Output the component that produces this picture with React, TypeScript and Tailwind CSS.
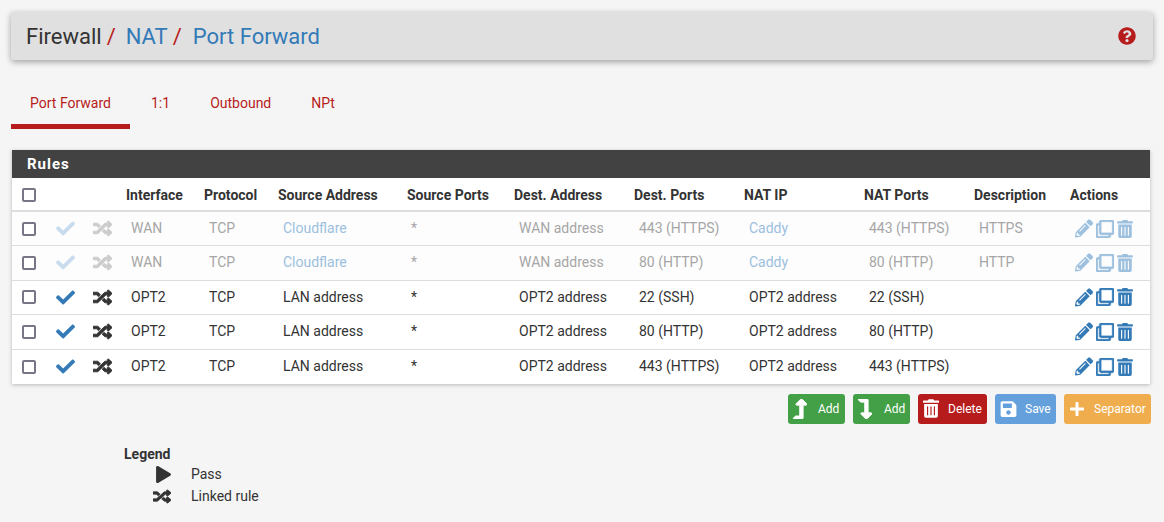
import React from "react";
import { FaCheck, FaRandom, FaPencilAlt, FaRegClone, FaTrashAlt, FaLevelUpAlt, FaLevelDownAlt, FaSave, FaPlus, FaPlay, FaQuestionCircle } from "react-icons/fa";

const rows = [
  { off: true, i: "WAN", p: "TCP", s: "Cloudflare", link: true, sp: "*", d: "WAN address", dp: "443 (HTTPS)", n: "Caddy", nl: true, np: "443 (HTTPS)", de: "HTTPS" },
  { off: true, i: "WAN", p: "TCP", s: "Cloudflare", link: true, sp: "*", d: "WAN address", dp: "80 (HTTP)", n: "Caddy", nl: true, np: "80 (HTTP)", de: "HTTP" },
  { off: false, i: "OPT2", p: "TCP", s: "LAN address", link: false, sp: "*", d: "OPT2 address", dp: "22 (SSH)", n: "OPT2 address", nl: false, np: "22 (SSH)", de: "" },
  { off: false, i: "OPT2", p: "TCP", s: "LAN address", link: false, sp: "*", d: "OPT2 address", dp: "80 (HTTP)", n: "OPT2 address", nl: false, np: "80 (HTTP)", de: "" },
  { off: false, i: "OPT2", p: "TCP", s: "LAN address", link: false, sp: "*", d: "OPT2 address", dp: "443 (HTTPS)", n: "OPT2 address", nl: false, np: "443 (HTTPS)", de: "" },
];

const heads = ["Interface", "Protocol", "Source Address", "Source Ports", "Dest. Address", "Dest. Ports", "NAT IP", "NAT Ports", "Description", "Actions"];

const Box = () => <span className="block w-[14px] h-[14px] rounded-[2px] border-2 border-[#767687] bg-white" />;

function Btn({ bg, icon, label, w, gap }: { bg: string; icon: React.ReactNode; label: string; w: string; gap: string }) {
  return (
    <button className={`${bg} ${w} ${gap} h-[30px] rounded-[3px] flex items-center pl-[5px] text-white text-[12px]`}>
      {icon}
      <span>{label}</span>
    </button>
  );
}

export default function App() {
  return (
    <div className="min-h-[522px] bg-[#f5f5f5] text-[#333] text-[14px] font-['Roboto',sans-serif] pt-[12px] px-[11px] pb-[12px]">
      <div className="h-[48px] bg-[#e0e0e0] rounded-[3px] shadow-[0_2px_6px_rgba(0,0,0,0.35)] flex items-center justify-between pl-[15px] pr-[16px] text-[22px] leading-none">
        <div className="flex items-center pt-[1px]">
          <span className="text-[#333]">Firewall</span>
          <span className="text-[#b71c1c] ml-[5px] mr-[10px]">/</span>
          <span className="text-[#337ab7]">NAT</span>
          <span className="text-[#b71c1c] ml-[5px] mr-[11px]">/</span>
          <span className="text-[#337ab7]">Port Forward</span>
        </div>
        <FaQuestionCircle className="text-[#b71c1c] w-[18px] h-[18px] mr-[1px]" />
      </div>

      <div className="mt-[20px] flex h-[49px] text-[14px] text-[#b71c1c]">
        <div className="w-[119px] flex items-center justify-center border-b-[5px] border-[#b71c1c] pt-[3px]">Port Forward</div>
        <div className="pl-[21px] pr-[20px] flex items-center pb-[2px]">1:1</div>
        <div className="px-[20px] flex items-center pb-[2px]">Outbound</div>
        <div className="px-[20px] flex items-center pb-[2px]">NPt</div>
      </div>

      <div className="mt-[21px] ml-[1px] mr-[3px] bg-white shadow-[0_1px_4px_rgba(0,0,0,0.25)]">
        <div className="h-[28px] bg-[#424242] text-white font-bold text-[15px] tracking-[1px] flex items-center pl-[15px] pt-[1px]">Rules</div>
        <table className="w-full table-fixed border-collapse">
          <colgroup>
            <col className="w-[34px]" />
            <col className="w-[35px]" />
            <col className="w-[45px]" />
            <col className="w-[78px]" />
            <col className="w-[74px]" />
            <col className="w-[129px]" />
            <col className="w-[107px]" />
            <col className="w-[120px]" />
            <col className="w-[110px]" />
            <col className="w-[120px]" />
            <col className="w-[110px]" />
            <col className="w-[96px]" />
            <col />
          </colgroup>
          <thead>
            <tr className="h-[33px] border-b-2 border-[#ddd]">
              <th className="pl-[10px] font-bold text-left pt-[2px]"><Box /></th>
              <th />
              <th />
              {heads.map((h) => (
                <th key={h} className="text-left font-bold text-[14px] text-[#333] whitespace-nowrap pt-[2px]">{h}</th>
              ))}
            </tr>
          </thead>
          <tbody>
            {rows.map((r, k) => (
              <tr key={k} className={`h-[34.5px] text-[14px] ${k ? "border-t border-[#ddd]" : ""} ${r.off ? "bg-[#fdfdfd] text-[#a6a6a6]" : "text-[#333]"}`}>
                <td className="pl-[10px] "><Box /></td>
                <td className="pl-[10px]"><FaCheck className={`w-[19px] h-[19px] ${r.off ? "text-[#c9dced]" : "text-[#337ab7]"}`} /></td>
                <td className="pl-[12px]"><FaRandom preserveAspectRatio="none" stroke="currentColor" strokeWidth="24" className={`w-[19px] h-[17px] ${r.off ? "text-[#cccccc]" : "text-[#333]"}`} /></td>
                <td className="pl-[5px]">{r.i}</td>
                <td className="pl-[5px]">{r.p}</td>
                <td className={`pl-[5px] ${r.link ? "text-[#9cc0de]" : ""}`}>{r.s}</td>
                <td className="pl-[4px]">{r.sp}</td>
                <td className="pl-[5px]">{r.d}</td>
                <td className="pl-[5px]">{r.dp}</td>
                <td className={`pl-[5px] ${r.nl ? "text-[#9cc0de]" : ""}`}>{r.n}</td>
                <td className="pl-[5px] whitespace-nowrap">{r.np}</td>
                <td className="pl-[5px]">{r.de}</td>
                <td className="pl-[5px]">
                  <div className={`flex items-center gap-[3px] ${r.off ? "text-[#9cc0de]" : "text-[#337ab7]"}`}>
                    <FaPencilAlt className="w-[18px] h-[19px]" />
                    <FaRegClone stroke="currentColor" strokeWidth="20" className="w-[18px] h-[18px]" />
                    <FaTrashAlt className="w-[16px] h-[18px]" />
                  </div>
                </td>
              </tr>
            ))}
          </tbody>
        </table>
      </div>

      <div className="mt-[10px] flex justify-end gap-[8px] mr-[2px]">
        <Btn bg="bg-[#43a047]" w="w-[57px]" gap="gap-[11px]" label="Add" icon={<FaLevelUpAlt preserveAspectRatio="none" stroke="currentColor" strokeWidth="20" className="w-[14px] h-[20px]" />} />
        <Btn bg="bg-[#43a047]" w="w-[57px]" gap="gap-[12px]" label="Add" icon={<FaLevelDownAlt preserveAspectRatio="none" stroke="currentColor" strokeWidth="20" className="w-[14px] h-[20px]" />} />
        <Btn bg="bg-[#b71c1c]" w="w-[69px]" gap="gap-[9px]" label="Delete" icon={<FaTrashAlt className="w-[16px] h-[19px]" />} />
        <Btn bg="bg-[#64a0dc]" w="w-[61px]" gap="gap-[8px]" label="Save" icon={<FaSave className="w-[17px] h-[18px]" />} />
        <Btn bg="bg-[#f0ad4e]" w="w-[87px]" gap="gap-[9px]" label="Separator" icon={<FaPlus className="w-[16px] h-[16px]" />} />
      </div>

      <div className="mt-[20px] ml-[113px] text-[14px]">
        <div className="font-bold h-[20px] leading-[20px]">Legend</div>
        <div className="flex items-center h-[21px]">
          <FaPlay className="w-[17px] h-[17px] ml-[31px] mr-[19px]" />
          <span>Pass</span>
        </div>
        <div className="flex items-center h-[23px]">
          <FaRandom preserveAspectRatio="none" stroke="currentColor" strokeWidth="24" className="w-[18px] h-[15px] ml-[29px] mr-[20px]" />
          <span>Linked rule</span>
        </div>
      </div>
    </div>
  );
}
